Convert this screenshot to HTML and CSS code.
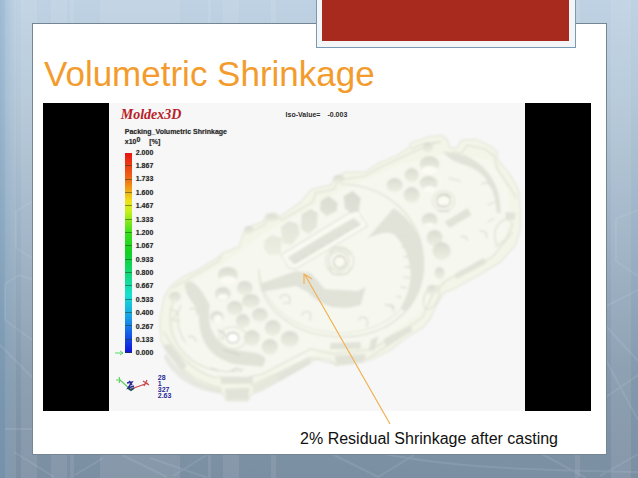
FILE: index.html
```html
<!DOCTYPE html>
<html lang="en">
<head>
<meta charset="utf-8">
<title>Volumetric Shrinkage</title>
<link rel="stylesheet" href="styles.css">
</head>
<body>
<svg class="backdrop" viewBox="0 0 638 478" preserveAspectRatio="none" aria-hidden="true">
  <defs>
    <linearGradient id="sky" x1="0" y1="0" x2="0" y2="1">
      <stop offset="0" stop-color="#bfd2e3"/><stop offset=".2" stop-color="#b4c8d9"/>
      <stop offset=".5" stop-color="#9cb1c4"/><stop offset=".8" stop-color="#8398ab"/>
      <stop offset="1" stop-color="#7b8fa2"/>
    </linearGradient>
    <linearGradient id="edge"><stop offset="0" stop-color="#6b96bb" stop-opacity=".4"/><stop offset="1" stop-color="#6b96bb" stop-opacity="0"/></linearGradient>
  </defs>
  <path fill="url(#sky)" d="M0 0h638v478H0z"/>
  <path fill="url(#edge)" d="M0 0h18v478H0z"/>
  <g fill="#fff" opacity=".08">
    <path d="M5 0h11v478H5zM21 0h16v478H21zM51 0h16v478H51zM70 0h4v478h-4zM100 0h4v478h-4zM104 0h76v478h-76zM208 0h3v478h-3zM223 0h16v478h-16zM271 0h5v478h-5zM575 0h5v478h-5zM611 0h16v478h-16zM627 0h4v478h-4z"/>
  </g>
  <g fill="none" stroke="#d4e3ef" stroke-opacity=".13" stroke-width="2">
    <path d="M35 200l-19 11v37l19 12M35 280l-16-5-14 9v36l30 22M0 345l35 35M5 429h27M14 452l40 25M75 475l28-17M122 455l45 22M150 458l58 20M208 454l-35 22M332 454l46 23 36-22M385 454c60 12 130 16 253 18M542 454l44 24M600 476l38-22M638 210l-22 9v42l22 15M638 290l-32 16M606 326l32 35M638 375l-32 22M606 360l32 60"/>
  </g>
</svg>
<main class="slide">
  <div class="ribbon"></div>
  <h1 class="title">Volumetric Shrinkage</h1>
  <figure class="figure">
    <div class="screen">
      <div class="viewport">
        <svg class="part" viewBox="108 103 417 308" role="img" aria-label="Translucent model of the cast part">
          <defs>
            <filter id="soft" x="-5%" y="-5%" width="110%" height="110%"><feGaussianBlur stdDeviation=".9"/></filter>
            <linearGradient id="hole" x1="0" y1="0" x2="0" y2="1"><stop offset="0" stop-color="#dadcd2"/><stop offset="1" stop-color="#eceee2"/></linearGradient>
          </defs>
          <g filter="url(#soft)">
            <path fill="#f3f5e8" stroke="#e7e9dd" stroke-width="1.5" stroke-linejoin="round" d="M159 320L163 298 170 286 182 277 197 270 218 257 222 253 238 247 243 232 250 226 262 222 266 214 275 213 279 217 300 202 310 190 320 187 330 185 335 177 345 172 365 172 378 163 395 156 409 147 410 143 430 136 441 135 447 140 449 147 456 148 461 140 475 139 490 146 497 152 496 158 510 175 518 190 520 210 520 228 515 245 500 262 480 274 455 288 443 293 436 305 430 318 422 328 405 338 390 350 370 360 350 364 335 366 330 360 318 358 300 368 280 380 262 390 250 395 247 401 226 401 222 394 210 390 195 382 180 370 165 350 160 340z"/>
            <path fill="#f8f8f1" opacity=".6" d="M172 310L186 284 222 264 262 234 340 190 400 164 450 153 490 160 508 190 510 225 494 255 440 280 420 312 375 345 330 348 296 362 245 382 205 376 178 348z"/>
            <g fill="none" stroke="#dfe2d5" stroke-width="1.3">
              <path d="M163 332C174 352 190 370 212 377L245 378 262 374 310 349 332 354 370 350 400 333 422 317 432 295 445 281 492 257 512 232"/>
              <path d="M163 347C176 365 190 382 220 388M250 386L310 358 335 364 368 358 402 336"/>
              <path d="M340 184c47 1 83 34 83 80 0 43-35 73-82 73-47 0-83-28-83-67"/>
              <path d="M258 269c4 39 37 63 82 64 43 0 76-27 79-66" stroke="#e8ebde"/>
              <path d="M171 288L186 280 218 261 221 256M244 234L264 225 267 217 276 217 281 220 312 202 315 193 333 189 338 180 364 176 380 167 412 152 440 141"/>
              <path d="M410 149L424 143 440 142M451 152L461 153 467 145 485 149 495 157M494 158L497 169 510 188 516 198"/>
              <path d="M509 220c-8-2-14 5-15 14l2 12 10-7 6-15zM437 286c-10 0-15 9-14 18 1 8 7 6 11 1 4-6 7-12 3-19z"/>
              <path d="M174 297c-8 17-6 38 5 51 14 19 39 29 64 21M180 305c-6 12-3 28 5 38"/>
              <path d="M448 178l12 3M487 205l7-3M487 222l7-4"/>
            </g>
            <g fill="#e1e3d9">
              <path d="M442 151L464 155C486 164 501 184 500 214L496 212C495 191 488 178 474 169 464 163 452 164 442 151z"/>
              <path d="M393 208C412 220 423 239 423 263 422 283 416 300 405 312L400 308C414 284 413 259 397 238 392 230 382 232 367 238z"/>
              <path d="M259 284L295 271 310 273 324 289 357 291 365 287 360 305C339 311 321 308 307 292L295 286 261 292z"/>
              <path d="M184 283c7-5 13 3 18 10l7 12c-4 22 5 40 26 45l20 3c11 3 11 6 7 14l-22-2c-26-3-42-20-42-48-1-13-15-19-14-34z"/>
              <path d="M286 256l67-38 8 7-67 40zM444 222l23-14 4 7-22 13zM220 377h32v7h-32zM224 389l25-1-2 12h-21zM162 345l7-1 17 22-5 5zM330 343l30-1v7h-31zM334 356l31-2-2 9-27 2z"/>
              <path d="M276 376l32-18 2 6-32 18zM383 339l27-14 2 6-27 15zM454 274l29-16 3 5-30 16zM505 212l10 1-1 7-9-1zM378 336l-8 4-2 11 6-1z"/>
              <path opacity=".75" d="M165 353C184 382 207 386 221 389V394C192 391 173 378 163 358zM252 387L308 357 311 361 262 390 252 393z"/>
            </g>
            <g fill="url(#hole)">
              <path d="M264 240l7-5 10 3-1 16-12 1-5-7zM280 227l8-6 9 3 2 10-8 11-9-2zM301 214l9-5 7 4-1 14-8 7-8-5zM320 201l8-5 9 7-1 8-10 5-7-6zM343 196l9-5 8 7-2 13-7 3-7-6z"/>
              <ellipse cx="429" cy="164" rx="10" ry="8"/><ellipse cx="411" cy="175" rx="7" ry="7"/><ellipse cx="394" cy="185" rx="8" ry="7"/>
              <ellipse cx="411" cy="195" rx="8" ry="8"/><ellipse cx="428" cy="183" rx="9" ry="7"/><ellipse cx="429" cy="220" rx="8" ry="7"/>
              <ellipse cx="434" cy="238" rx="8" ry="8"/><ellipse cx="441" cy="251" rx="9" ry="9"/><ellipse cx="427" cy="147" rx="5" ry="5"/>
              <ellipse cx="439" cy="273" rx="5" ry="6"/><ellipse cx="431" cy="290" rx="5" ry="5"/>
              <ellipse cx="227" cy="275" rx="10" ry="8"/><ellipse cx="222" cy="294" rx="8" ry="7"/><ellipse cx="244" cy="288" rx="8" ry="7"/>
              <ellipse cx="250" cy="301" rx="9" ry="7"/><ellipse cx="234" cy="308" rx="8" ry="7"/><ellipse cx="242" cy="321" rx="7" ry="7"/>
              <ellipse cx="259" cy="315" rx="8" ry="7"/><ellipse cx="272" cy="328" rx="8" ry="8"/><ellipse cx="251" cy="338" rx="8" ry="8"/>
              <ellipse cx="269" cy="347" rx="8" ry="8"/><ellipse cx="289" cy="339" rx="9" ry="8"/><ellipse cx="216" cy="317" rx="7" ry="6"/>
              <ellipse cx="174" cy="297" rx="6" ry="5"/><ellipse cx="271" cy="218" rx="6" ry="4"/><ellipse cx="338" cy="179" rx="6" ry="4"/><ellipse cx="248" cy="230" rx="5" ry="4"/>
            </g>
            <g fill="#fbfbf4">
              <ellipse cx="429" cy="170" rx="8" ry="4"/><ellipse cx="429" cy="189" rx="6" ry="3"/><ellipse cx="227" cy="280" rx="8" ry="4"/>
              <ellipse cx="222" cy="297" rx="5" ry="3"/><ellipse cx="217" cy="319" rx="4" ry="4"/><ellipse cx="429" cy="225" rx="5" ry="2"/>
            </g>
            <path fill="none" stroke="#f9faf2" stroke-width="4" stroke-linejoin="round" d="M282 258l70-43 9-2 4 11-66 40-9 4z"/>
            <path fill="none" stroke="#dcdfd2" d="M280 255l73-45 5 1 9 15-72 43-7-1z"/>
            <path fill="none" stroke="#dcdfd2" stroke-width="2" stroke-dasharray="5 5" d="M293 262l65-38"/>
            <g fill="none" stroke="#dcdfd2" stroke-width="1.3">
              <circle cx="339" cy="261" r="14" stroke="#e3e6d8"/><circle cx="338" cy="261" r="10"/><circle cx="339" cy="262" r="6" fill="#fafaf2" stroke="#cdd0c4"/>
              <path d="M329 253l5-5 10 1 6 6M328 267l4 7h14l5-7M334 258l4-3 6 2M335 266l4 2 5-3"/>
              <ellipse cx="443" cy="201" rx="11" ry="10" stroke="#e3e6d8"/><ellipse cx="443" cy="201" rx="7" ry="6" fill="#fafaf2" stroke="#cfd2c7"/>
              <path d="M436 200c1-7 11-8 14-2M437 206h9M438 211h11" stroke="#cfd2c7"/>
              <ellipse cx="232" cy="338" rx="14" ry="11" stroke="#e3e6d8"/><ellipse cx="232" cy="338" rx="6" ry="5" fill="#fff" stroke="#cfd2c7"/>
              <path d="M226 337c1-5 8-6 11-2M217 330l7 4-3 6M222 350l17 5" stroke="#cfd2c7"/>
              <path d="M279 299c1-5 8-6 10-1v5h-7M301 316c1-5 8-6 9-1l-1 6M358 320c2-4 8-4 9 2l-1 5M384 305c5-1 10 3 9 7M189 309c5-2 8 1 7 6M187 337c4-2 8 1 8 5M481 184l6-2 4 5M460 237c4-2 7 1 7 4M479 231c5-1 8 2 7 7"/>
              <path d="M398 237l6-1M401 247l6-1M403 257l6-1M404 267h6M403 277l6 1M400 287l6 1M396 296l5 2M390 304l4 4"/>
              <path d="M169 309l8 3-6 8 8 1M210 368l8 3M230 371l6-3 5 4"/>
            </g>
          </g>
        </svg>
        <header class="readout">
          <strong class="brand">Moldex3D</strong>
          <span class="iso"><span>Iso-Value=</span><span>-0.003</span></span>
        </header>
        <p class="quantity">Packing_Volumetric Shrinkage</p>
        <p class="unit"><span>x10<sup>0</sup></span><span>[%]</span></p>
        <div class="scale">
          <svg class="marker" viewBox="0 0 9 6" aria-hidden="true"><path d="M0 3h8M5 1l3 2-3 2" fill="none" stroke="#58d76c"/></svg>
          <div class="bar"><i></i><i></i><i></i><i></i><i></i><i></i><i></i><i></i><i></i><i></i><i></i><i></i><i></i><i></i><i></i></div>
          <ol class="ticks">
            <li>2.000</li><li>1.867</li><li>1.733</li><li>1.600</li><li>1.467</li><li>1.333</li><li>1.200</li><li>1.067</li>
            <li>0.933</li><li>0.800</li><li>0.667</li><li>0.533</li><li>0.400</li><li>0.267</li><li>0.133</li><li>0.000</li>
          </ol>
        </div>
        <div class="orientation">
          <svg class="axes" viewBox="114 374 36 18" aria-hidden="true">
            <g fill="none" stroke-width="1.2">
              <path stroke="#5fd05f" d="M129 388l-10-9M115 379h4M118 376l1 3-1 3"/>
              <path stroke="#c8464b" d="M130 388l17-6M142 380l6 4M143 385l3-6"/>
              <path stroke="#2c2c9c" stroke-width="1.5" d="M126 382l5-1-4 6 6-2M128 380l3 4"/>
              <path stroke="#244e58" stroke-width="2" d="M127 387l3 2 3-2"/>
            </g>
          </svg>
          <div class="counts"><span>28</span><span>1</span><span>327</span><span>2.63</span></div>
        </div>
      </div>
    </div>
    <svg class="arrow" viewBox="0 0 548 322" aria-hidden="true">
      <path d="M347 321L262 172M261 181v-10l8 5" fill="none" stroke="#f2b154" stroke-width="1.2"/>
    </svg>
    <figcaption class="caption">2% Residual Shrinkage after casting</figcaption>
  </figure>
</main>
</body>
</html>
```
FILE: styles.css
```css
* {
  box-sizing: border-box;
}

body {
  margin: 0;
  min-height: 100vh;
  padding: 23px 31px 23px 32px;
  display: grid;
  font-family: "Liberation Sans", Arial, sans-serif;
  color: #111;
}

.backdrop {
  position: fixed;
  inset: 0;
  z-index: -1;
  width: 100%;
  height: 100%;
}

.slide {
  position: relative;
  padding: 30px 15px 0 10px;
  background: #fff;
  border: 1px solid #748594;
}

.ribbon {
  position: absolute;
  top: -24px;
  right: 31px;
  width: 45%;
  height: 47px;
  background: #a8291e;
  border: solid #f4f5f7;
  border-width: 0 6px 6px 5px;
  outline: 1px solid #789bb5;
}

.title {
  margin: 0;
  padding-left: 1px;
  font-size: 35px;
  line-height: 40px;
  font-weight: 400;
  color: #f39c2d;
}

.figure {
  position: relative;
  margin: 9px 0 0;
}

.screen {
  display: flex;
  justify-content: center;
  background: #000;
}

.viewport {
  position: relative;
  width: 76%;
  padding: 4px 12px 12px 6px;
  background: #f7f7f7;
  font-size: 7px;
  line-height: 8px;
  font-weight: 700;
  color: #2b2b2b;
}

.part {
  position: absolute;
  inset: 0;
  width: 100%;
  height: 100%;
}

.readout,
.quantity,
.unit,
.scale,
.orientation {
  position: relative;
}

.readout {
  display: grid;
  grid-template-columns: 42% 1fr;
  align-items: center;
  padding-left: 6px;
  line-height: 16px;
}

.brand {
  font: italic 700 14px/16px "Liberation Serif", "Times New Roman", serif;
  color: #b92028;
}

.iso {
  display: flex;
  gap: 7px;
}

.quantity {
  margin: 5px 0 0 10px;
}

.unit {
  display: flex;
  gap: 9px;
  margin: 2px 0 0 10px;
}

.unit sup {
  font-size: 7px;
  line-height: 0;
  vertical-align: 2px;
}

.scale {
  display: flex;
  align-items: stretch;
}

.marker {
  align-self: flex-end;
  width: 9px;
  height: 6px;
  margin-bottom: 4px;
}

.bar {
  display: grid;
  grid-auto-rows: 1fr;
  width: 7px;
  margin: 7px 4px 7px 1px;
  background: linear-gradient(#e81414, #f06a14 13%, #f0e01c 24%, #c8f01c 29%, #3ce01c 40%, #12d022 50%, #12d878 60%, #18e0d0 71%, #18a0e8 82%, #1450e8 92%, #1010d8);
}

.bar i {
  border-bottom: 1px solid rgb(30 60 30 / 50%);
}

.ticks {
  display: grid;
  grid-auto-rows: 1fr;
  height: 214px;
  margin: 0;
  padding: 0;
  list-style: none;
  align-items: center;
}

.quantity,
.unit,
.ticks {
  text-shadow: 0 0 1px #999;
}

.orientation {
  display: flex;
  gap: 7px;
  margin-top: 15px;
}

.axes {
  width: 36px;
  height: 18px;
}

.counts {
  display: grid;
  grid-auto-rows: 6px;
  line-height: 6px;
  color: #2a2a9a;
}

.arrow {
  position: absolute;
  top: 0;
  left: 0;
  width: 100%;
  overflow: visible;
}

.caption {
  margin: 18px 33px 0 0;
  text-align: right;
  font-size: 16px;
  line-height: 20px;
}
```
